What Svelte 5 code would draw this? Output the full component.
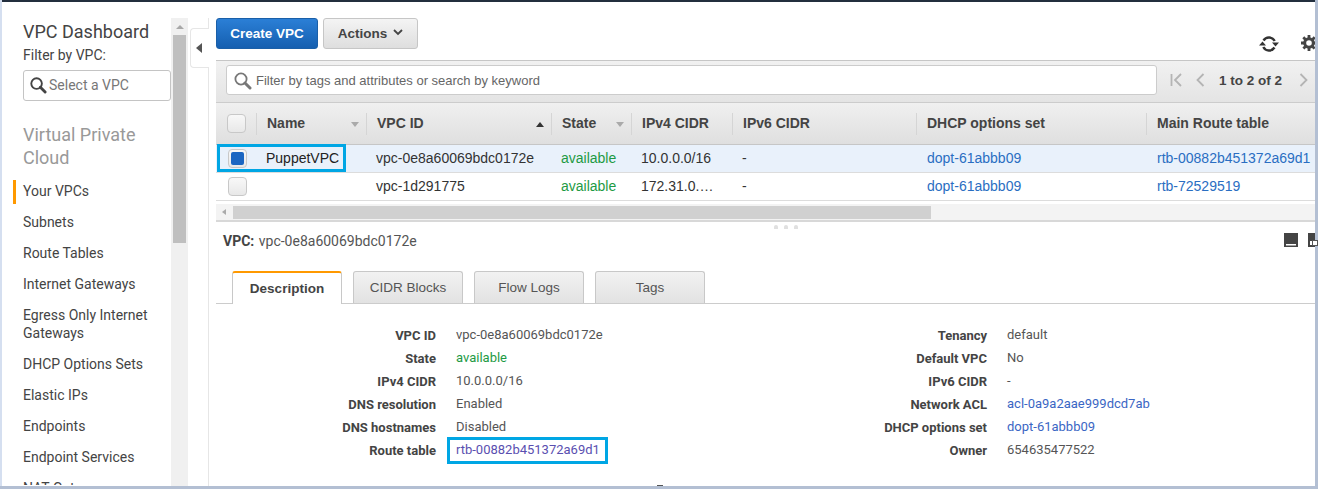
<script>
  const nav = [
    { label: 'Your VPCs', active: true },
    { label: 'Subnets' },
    { label: 'Route Tables' },
    { label: 'Internet Gateways' },
    { label: 'Egress Only Internet Gateways' },
    { label: 'DHCP Options Sets' },
    { label: 'Elastic IPs' },
    { label: 'Endpoints' },
    { label: 'Endpoint Services' },
    { label: 'NAT Gateways' }
  ]

  const columns = [
    { label: 'Name', sort: 'off' },
    { label: 'VPC ID', sort: 'up' },
    { label: 'State', sort: 'off' },
    { label: 'IPv4 CIDR' },
    { label: 'IPv6 CIDR' },
    { label: 'DHCP options set' },
    { label: 'Main Route table' }
  ]

  const rows = [
    { name: 'PuppetVPC', id: 'vpc-0e8a60069bdc0172e', cidr: '10.0.0.0/16', route: 'rtb-00882b451372a69d1', selected: true },
    { name: '', id: 'vpc-1d291775', cidr: '172.31.0.0/16', route: 'rtb-72529519', selected: false }
  ]

  const tabs = ['Description', 'CIDR Blocks', 'Flow Logs', 'Tags']

  const details = [
    ['VPC ID', 'vpc-0e8a60069bdc0172e', '', 'Tenancy', 'default', ''],
    ['State', 'available', 'ok', 'Default VPC', 'No', ''],
    ['IPv4 CIDR', '10.0.0.0/16', '', 'IPv6 CIDR', '-', ''],
    ['DNS resolution', 'Enabled', '', 'Network ACL', 'acl-0a9a2aae999dcd7ab', 'link'],
    ['DNS hostnames', 'Disabled', '', 'DHCP options set', 'dopt-61abbb09', 'link'],
    ['Route table', 'rtb-00882b451372a69d1', 'visited', 'Owner', '654635477522', '']
  ]
</script>

<div class="frame">
  <aside class="sidebar">
    <h1>VPC Dashboard</h1>
    <div class="filter-label">Filter by VPC:</div>
    <div class="vpc-select">
      <svg width="18" height="18" viewBox="0 0 19 19"><circle cx="8" cy="8" r="5.6" fill="none" stroke="#444" stroke-width="2"/><path d="M12 12l5 5" stroke="#444" stroke-width="3" stroke-linecap="round"/></svg>
      <span>Select a VPC</span>
    </div>
    <h2>Virtual Private Cloud</h2>
    <nav>
      {#each nav as item}
        <div class="nav-item" class:active={item.active}>{item.label}</div>
      {/each}
    </nav>
  </aside>

  <div class="side-scroll">
    <div class="scroll-up"></div>
    <div class="scroll-thumb"></div>
  </div>

  <div class="collapse-col">
    <div class="collapse"><span></span></div>
  </div>

  <main>
    <div class="toolbar">
      <button class="primary">Create VPC</button>
      <button class="secondary">Actions
        <svg width="10" height="7" viewBox="0 0 10 7"><path d="M1 1l4 4 4-4" fill="none" stroke="#444" stroke-width="1.8"/></svg>
      </button>
      <div class="tools">
        <svg width="20" height="18" viewBox="0 0 20 18">
          <path d="M4.500 5.500A6.500 6.500 0 0 1 15.700 6" fill="none" stroke="#333" stroke-width="2.400"/>
          <path d="M13 7.500h7l-3.500 4z" fill="#333"/>
          <path d="M15.500 12.500A6.500 6.500 0 0 1 4.300 12" fill="none" stroke="#333" stroke-width="2.400"/>
          <path d="M0 10.500h7l-3.500-4z" fill="#333"/>
        </svg>
        <svg class="gear" width="16" height="16" viewBox="0 0 16 16">
          <circle cx="8" cy="8" r="4.300" fill="none" stroke="#444" stroke-width="3"/>
          <path d="M8 0v16M0 8h16M2.300 2.300l11.400 11.400M13.700 2.300L2.300 13.700" stroke="#444" stroke-width="2.800" stroke-dasharray="3 10 3"/>
        </svg>
      </div>
    </div>

    <div class="filter-bar">
      <div class="search">
        <svg width="19" height="19" viewBox="0 0 19 19"><circle cx="8" cy="8" r="5.600" fill="none" stroke="#777" stroke-width="1.800"/><path d="M12 12l5 5" stroke="#777" stroke-width="3" stroke-linecap="round"/></svg>
        <span>Filter by tags and attributes or search by keyword</span>
      </div>
      <div class="pager">
        <svg width="13" height="14" viewBox="0 0 13 14"><path d="M1.500 1v12M11 1L5 7l6 6" fill="none" stroke="#b4b4b4" stroke-width="1.800"/></svg>
        <svg class="prev" width="9" height="14" viewBox="0 0 9 14"><path d="M7.500 1L1.500 7l6 6" fill="none" stroke="#b4b4b4" stroke-width="1.800"/></svg>
        <span>1 to 2 of 2</span>
        <svg class="next" width="9" height="14" viewBox="0 0 9 14"><path d="M1.500 1l6 6-6 6" fill="none" stroke="#b4b4b4" stroke-width="1.800"/></svg>
      </div>
    </div>

    <div class="table">
      <div class="grid head">
        <div class="check-cell"><span class="check"></span></div>
        {#each columns as col}
          <div class="th">
            {col.label}
            {#if col.sort === 'off'}<i class="sort off"></i>{/if}
            {#if col.sort === 'up'}<i class="sort up"></i>{/if}
          </div>
        {/each}
      </div>
      {#each rows as row}
        <div class="grid row" class:selected={row.selected}>
          <div class="check-cell"><span class="check" class:on={row.selected}></span></div>
          <div class="td">{row.name}</div>
          <div class="td">{row.id}</div>
          <div class="td ok">available</div>
          <div class="td clip">{row.cidr}</div>
          <div class="td">-</div>
          <div class="td link">dopt-61abbb09</div>
          <div class="td link">{row.route}</div>
        </div>
      {/each}
      <div class="callout row-callout"></div>
    </div>

    <div class="h-scroll">
      <i class="h-arrow"></i>
      <div class="h-thumb"></div>
    </div>

    <div class="splitter"><i></i><i></i><i></i></div>

    <div class="detail-head">
      <b>VPC:</b> <span>vpc-0e8a60069bdc0172e</span>
      <div class="dock">
        <svg width="14" height="14" viewBox="0 0 14 14"><path d="M0 0h14v14H0z" fill="#444"/><path d="M2 11h10v1.500H2z" fill="#fff"/></svg>
        <svg width="14" height="14" viewBox="0 0 14 14"><path d="M0 0h14v14H0z" fill="#444"/><path d="M2 8h4v4H2z" fill="#fff"/></svg>
      </div>
    </div>

    <div class="tabs">
      {#each tabs as tab, i}
        <div class="tab" class:current={i === 0}>{tab}</div>
      {/each}
    </div>

    <div class="details">
      {#each details as d}
        <div class="dt">{d[0]}</div>
        <div class="dd {d[2]}">{d[1]}</div>
        <div class="dt">{d[3]}</div>
        <div class="dd {d[5]}">{d[4]}</div>
      {/each}
      <div class="callout route-callout"></div>
    </div>
  </main>
  <i class="handle right-handle"></i>
  <i class="handle bottom-handle"></i>
  <i class="corner"></i>
</div>

<style>
  :global(body) {
    margin: 0;
    background: #b3bfd3;
    overflow: hidden;
  }

  .frame {
    position: relative;
    display: flex;
    width: 1313px;
    height: 484px;
    margin-left: 2px;
    border-top: 2px solid #232f3e;
    background: #fff;
    box-shadow: -2px 0 0 #d5dff0;
    font-family: "Liberation Sans", Arial, sans-serif;
    color: #444;
  }

  .sidebar {
    width: 148px;
    flex: none;
    height: 483px;
    padding-left: 21px;
    overflow: hidden;
    font-family: Roboto, sans-serif;
  }

  h1 {
    margin: 19px 0 0;
    font-size: 18px;
    line-height: 21px;
    font-weight: 400;
    color: #444;
  }

  .filter-label {
    margin-top: 4px;
    font-size: 14px;
    line-height: 18px;
    color: #444;
  }

  .vpc-select {
    display: flex;
    align-items: center;
    gap: 2px;
    box-sizing: border-box;
    width: 148px;
    height: 31px;
    margin-top: 6px;
    padding: 0 0 2px 5px;
    border: 1px solid #c4c4c4;
    border-radius: 3px;
    font-size: 14px;
    color: #777;
  }

  h2 {
    margin: 22px 0 0;
    font-size: 18px;
    line-height: 23px;
    font-weight: 400;
    color: #999;
  }

  nav {
    margin-top: 13px;
  }

  .nav-item {
    position: relative;
    font-size: 14px;
    line-height: 18px;
    margin-bottom: 13px;
    color: #444;
  }

  .nav-item.active::before {
    content: "";
    position: absolute;
    left: -10px;
    top: -2px;
    width: 3px;
    height: 24px;
    background: #f90;
  }

  .side-scroll {
    flex: none;
    position: relative;
    width: 17px;
    margin-top: 16px;
    background: #f0f0f0;
  }

  .scroll-up {
    position: absolute;
    left: 5px;
    top: 7px;
    border: 4px solid transparent;
    border-top: 0;
    border-bottom: 4px solid #a8a8a8;
  }

  .scroll-thumb {
    position: absolute;
    left: 2px;
    right: 2px;
    top: 17px;
    height: 208px;
    background: #bfbfbf;
  }

  .collapse-col {
    flex: none;
    width: 21px;
    box-sizing: border-box;
    margin-top: 16px;
    padding: 10px 0 0 2px;
    border-right: 1px solid #e6e6e6;
  }

  .collapse {
    display: flex;
    align-items: center;
    justify-content: center;
    box-sizing: border-box;
    width: 19px;
    height: 40px;
    border: 1px solid #e6e6e6;
    border-right: 0;
    border-radius: 4px 0 0 4px;
    background: #fff;
  }

  .collapse span {
    border: 5px solid transparent;
    border-left: 0;
    border-right: 6px solid #555;
    margin-left: -2px;
  }

  main {
    flex: none;
    width: 1099px;
    margin-left: 7px;
    position: relative;
    overflow: hidden;
  }

  .toolbar {
    position: relative;
    display: flex;
    gap: 5px;
    height: 58px;
    box-sizing: border-box;
    padding-top: 16px;
  }

  button {
    height: 31px;
    box-sizing: border-box;
    border-radius: 3px;
    font: bold 13.5px "Liberation Sans", Arial, sans-serif;
    padding: 0;
  }

  .primary {
    width: 102px;
    color: #fff;
    border: 1px solid #1a5fa8;
    background: linear-gradient(#2b7fd6, #155fb0);
  }

  .secondary {
    width: 95px;
    color: #444;
    border: 1px solid #c6c6c6;
    background: linear-gradient(#f4f4f4, #dedede);
  }

  .secondary svg {
    margin-left: 2px;
    vertical-align: 2px;
  }

  .tools {
    position: absolute;
    top: 33px;
    left: 1043px;
    display: flex;
    align-items: center;
    gap: 22px;
  }

  .gear {
    margin-top: -3px;
  }

  .filter-bar {
    display: flex;
    align-items: center;
    height: 42px;
    box-sizing: border-box;
    border-top: 1px solid #c6c6c6;
    padding: 4px 0 7px 10px;
    background: linear-gradient(#f1f1f1, #e4e4e4);
  }

  .search {
    display: flex;
    align-items: center;
    gap: 4px;
    box-sizing: border-box;
    width: 931px;
    height: 30px;
    padding-left: 6px;
    border: 1px solid #ccc;
    border-radius: 3px;
    background: #fff;
    font-size: 13px;
    color: #666;
  }

  .search svg {
    flex: none;
  }

  .pager {
    display: flex;
    align-items: center;
    margin-left: 13px;
    font-size: 13.5px;
    font-weight: 700;
    color: #444;
  }

  .pager .prev {
    margin-left: 13px;
    margin-right: 14px;
  }

  .pager .next {
    margin-left: 17px;
  }

  .table {
    position: relative;
    border-top: 1px solid #ccc;
  }

  .grid {
    display: grid;
    grid-template-columns: 40px 110px 185px 80px 101px 184px 230px 170px;
    overflow: hidden;
  }

  .head {
    height: 41px;
    align-items: center;
    background: linear-gradient(#f0f0f0, #dfdfdf);
    border-bottom: 1px solid #c6c6c6;
  }

  .th {
    position: relative;
    display: flex;
    align-items: center;
    height: 22px;
    box-sizing: border-box;
    padding: 0 0 2px 10px;
    border-left: 1px solid #d5d5d5;
    font-size: 14px;
    font-weight: 700;
    color: #444;
    white-space: nowrap;
  }

  .sort {
    position: absolute;
    right: 7px;
    top: 9px;
    border: 4px solid transparent;
  }

  .sort.off {
    border-top: 5px solid #aaa;
    border-bottom: 0;
  }

  .sort.up {
    border-bottom: 5px solid #333;
    border-top: 0;
  }

  .check-cell {
    display: flex;
    align-items: center;
    padding-left: 11px;
  }

  .row .check-cell {
    padding-left: 12px;
  }

  .check {
    position: relative;
    display: block;
    width: 17px;
    height: 17px;
    border: 1px solid #c8c8c8;
    border-radius: 4px;
    background: linear-gradient(#f8f8f8, #e8e8e8);
  }

  .check.on::after {
    content: "";
    position: absolute;
    inset: 2px;
    border-radius: 2px;
    background: #1b66c2;
  }

  .row {
    height: 27px;
    align-items: center;
    border-bottom: 1px solid #dcdcdc;
    background: #fff;
  }

  .row.selected {
    background: #e9f1fb;
  }

  .td {
    padding: 0 0 2px 10px;
    font-size: 14px;
    line-height: 18px;
    white-space: nowrap;
    color: #333;
  }

  .row .td:nth-child(2) {
    color: #222;
  }

  .td.ok {
    color: #1d9a44;
  }

  .td.clip {
    overflow: hidden;
    text-overflow: ellipsis;
    padding-right: 17px;
  }

  .td.link {
    padding-left: 11px;
    color: #2a6ec2;
  }

  .callout {
    position: absolute;
    box-sizing: border-box;
    border: 3px solid #00a6e4;
  }

  .row-callout {
    left: 1px;
    top: 41px;
    width: 129px;
    height: 28px;
  }

  .route-callout {
    left: 231px;
    top: 113px;
    width: 161px;
    height: 27px;
  }

  .h-scroll {
    position: relative;
    height: 14px;
    margin-top: 3px;
    padding: 2px 0 0 17px;
    background: #f3f3f3;
    border-bottom: 2px solid #d8d8d8;
  }

  .h-arrow {
    position: absolute;
    left: 6px;
    top: 5px;
    border: 3px solid transparent;
    border-left: 0;
    border-right: 4px solid #aaa;
  }

  .h-thumb {
    width: 698px;
    height: 13px;
    background: #d0d0d0;
  }

  .splitter {
    position: absolute;
    left: 558px;
    top: 223px;
    display: flex;
    gap: 6px;
  }

  .splitter i {
    width: 4px;
    height: 4px;
    background: #e0e0e0;
    border-radius: 2px 2px 0 0;
  }

  .detail-head {
    position: relative;
    margin-top: 9px;
    padding-left: 7px;
    height: 20px;
    font-family: Roboto, sans-serif;
    font-size: 14px;
    line-height: 20px;
    color: #555;
  }

  .detail-head b {
    color: #444;
    margin-right: 1px;
  }

  .dock {
    position: absolute;
    left: 1068px;
    top: 2px;
    display: flex;
    gap: 10px;
  }

  .tabs {
    display: flex;
    gap: 11px;
    height: 32px;
    margin-top: 20px;
    padding-left: 16px;
    border-bottom: 1px solid #ccc;
  }

  .tab {
    width: 110px;
    height: 32px;
    box-sizing: border-box;
    border: 1px solid #c8c8c8;
    border-bottom: 0;
    border-radius: 3px 3px 0 0;
    background: linear-gradient(#f2f2f2, #e2e2e2);
    text-align: center;
    font-size: 13.5px;
    line-height: 31px;
    color: #555;
  }

  .tab.current {
    height: 33px;
    border-top: 2px solid #f90;
    background: #fff;
    font-weight: 700;
    line-height: 31px;
    color: #444;
  }

  .details {
    position: relative;
    display: grid;
    grid-template-columns: 220px 331px 220px 200px;
    grid-auto-rows: 23px;
    margin-top: 20px;
    font-family: Roboto, sans-serif;
    font-size: 13px;
    line-height: 23px;
  }

  .dt {
    text-align: right;
    font-weight: 700;
    color: #444;
  }

  .dd {
    padding-left: 20px;
    color: #555;
    margin-top: -1px;
    white-space: nowrap;
  }

  .dd.ok {
    color: #1d9a44;
  }

  .dd.link {
    color: #3a66c4;
  }

  .dd.visited {
    color: #5a4fb0;
  }

  .handle {
    position: absolute;
    width: 4px;
    height: 4px;
    background: #fff;
    border: 1px solid #555;
  }

  .right-handle {
    left: 1310px;
    top: 238px;
  }

  .bottom-handle {
    left: 655px;
    top: 483px;
  }

  .corner {
    position: absolute;
    left: -2px;
    top: 484px;
    width: 11px;
    height: 3px;
    background: #d5dff0;
  }
</style>
